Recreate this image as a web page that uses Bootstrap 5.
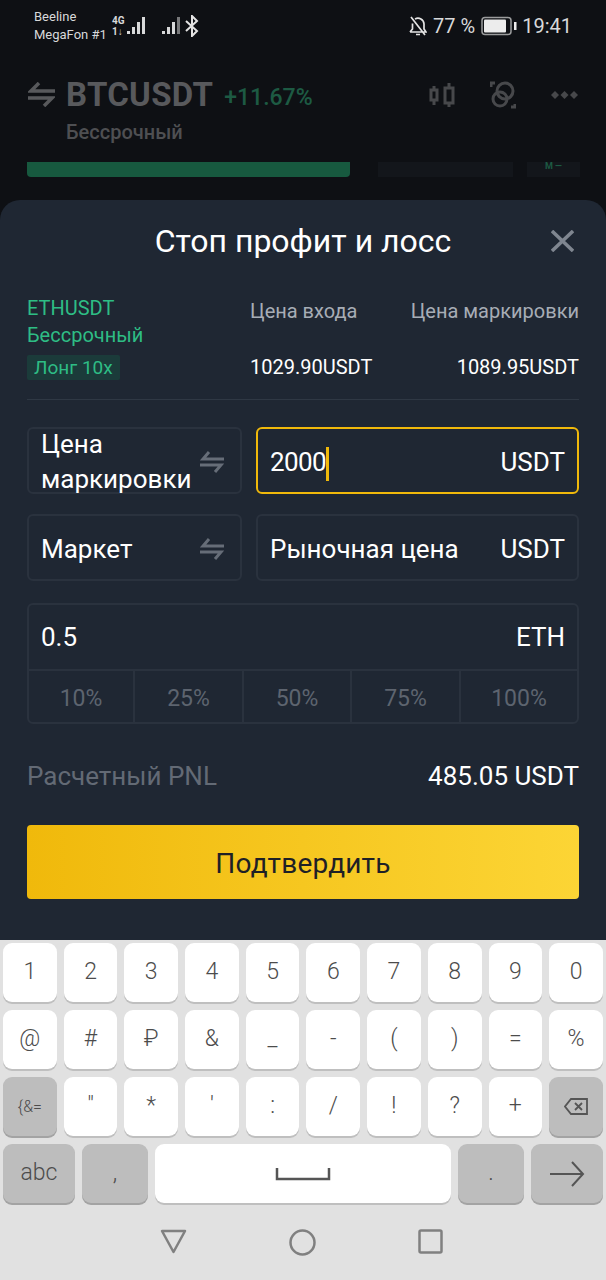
<!DOCTYPE html>
<html lang="ru">
<head>
  <meta charset="UTF-8" />
  <meta name="viewport" content="width=device-width, initial-scale=1" />
  <title>Стоп профит и лосс</title>
  <link href="https://cdn.jsdelivr.net/npm/bootstrap@5.3.0/dist/css/bootstrap.min.css" rel="stylesheet" />
  <style>
    body { background: #0e1014; font-family: Roboto, "Liberation Sans", sans-serif; width: 606px; height: 1280px; overflow: hidden; }
    /* status bar */
    .status-strip { height: 52px; padding: 0 34px; color: #d8d9da; }
    .carrier-names { font-size: 13px; line-height: 18px; width: 78px; }
    .net-tiny { font-size: 10px; line-height: 11px; font-weight: 700; width: 14px; margin-right: 1px; }
    .status-pct { font-size: 20px; margin: 0 6px; }
    .status-time { font-size: 20px; margin-left: 5px; }
    .sim-two { margin-left: 16px; }
    /* dimmed header behind the sheet */
    .dim-head { height: 148px; padding: 22px 28px 0 28px; }
    .dim-pair { font-size: 33px; line-height: 40px; font-weight: 700; color: #58595c; margin-left: 11px; letter-spacing: .3px; }
    .dim-change { font-size: 23px; font-weight: 500; color: #1d5a43; margin-left: 11px; padding-top: 7px; }
    .dim-sub { font-size: 20px; line-height: 22px; font-weight: 500; color: #4e4f52; margin: 5px 0 0 38px; }
    .dim-icons { gap: 35px; }
    .dim-bars { margin: 19px -2px 0 -1px; gap: 28px; }
    .dim-bar-main { width: 323px; height: 15px; background: #17593f; border-radius: 0 0 4px 4px; }
    .dim-bar-faint { width: 135px; height: 15px; background: #13161b; }
    .dim-bar-end { width: 53px; height: 15px; background: #13161b; margin-left: -14px; color: #1d5a43; font-size: 9px; line-height: 9px; text-align: center; font-weight: 700; }
    /* bottom sheet */
    .sheet { height: 740px; background: #1f2733; border-radius: 20px 20px 0 0; padding: 0 27px; color: #fff; }
    .sheet-title { height: 82px; font-size: 32px; position: relative; }
    .sheet-close { position: absolute; right: 5px; top: 30px; }
    .pos-info { height: 118px; padding-top: 13px; border-bottom: 1px solid #2f3844; }
    .pos-first { width: 223px; }
    .pos-green { color: #2ebd85; font-size: 20px; line-height: 27px; }
    .pos-tag { display: inline-block; background: #1b3b3a; color: #2ebd85; font-size: 19px; line-height: 25px; padding: 0 7px; border-radius: 2px; margin-top: 6px; }
    .pos-label { color: #a7adb6; font-size: 20px; line-height: 27px; padding-top: 3px; }
    .pos-val { font-size: 20px; line-height: 24px; margin-top: 30px; }
    .pair-row { gap: 14px; margin-top: 27px; }
    .pair-row + .pair-row { margin-top: 20px; }
    .field-box { height: 67px; border: 2px solid #2a323e; border-radius: 6px; padding: 3px 12px 0; font-size: 26px; }
    .field-left { width: 215px; padding-right: 16px; }
    .field-right { width: 323px; }
    .field-active { border-color: #f0b90b; }
    .two-lines { line-height: 35px; }
    .caret-mark { display: inline-block; width: 3px; height: 34px; background: #f0b90b; vertical-align: middle; }
    .tight-num { letter-spacing: -.6px; }
    .amount-box { margin-top: 22px; border: 2px solid #2a323e; border-radius: 6px; font-size: 26px; }
    .amount-top { height: 66px; padding: 1px 12px 0; border-bottom: 2px solid #2a323e; }
    .pct-cell { height: 51px; padding-top: 6px; font-size: 23px; color: #5d646f; width: 109px; border-left: 2px solid #2a323e; }
    .pct-cell:first-child { border-left: 0; width: 104px; }
    .pct-cell:nth-child(3) { width: 108px; }
    .pct-cell:last-child { width: 118px; }
    .pnl-row { margin-top: 35px; height: 34px; font-size: 26px; }
    .pnl-label { color: #636a75; }
    .confirm-btn { margin-top: 32px; height: 74px; width: 100%; padding-top: 10px; background: linear-gradient(90deg, #f0b90b, #fcd535); color: #1e2026; font-size: 28px; letter-spacing: .2px; border-radius: 4px; border: 0; }
    /* keyboard */
    .kbd-area { height: 340px; background: #e1e1e1; padding: 3px 3px 0; }
    .kbd-row { gap: 7px; height: 59px; margin-bottom: 8px; }
    .kbd-key { width: 53.7px; background: #fff; border-radius: 9px; color: #4c4c4c; font-size: 23px; font-weight: 300; box-shadow: 0 2px 0 #bfbfbf; }
    .kbd-key.kbd-gray { background: #bdbdbd; box-shadow: 0 2px 0 #a3a3a3; }
    .kbd-wide { width: 72px; }
    .kbd-mid { width: 66px; }
    .kbd-space { width: 296px; }
    .kbd-small { font-size: 16px; }
    .sys-nav { margin-top: 26px; padding-right: 3px; gap: 102px; }
  </style>
</head>
<body>
  <!-- Status bar -->
  <div class="status-strip d-flex align-items-center">
    <div class="carrier-names">Beeline<br />MegaFon #1</div>
    <div class="net-tiny">4G<br />1↓</div>
    <svg width="18" height="20" viewBox="0 0 18 20" fill="#d8d9da"><rect x="0" y="15" width="3" height="3"/><rect x="5" y="11" width="3" height="7"/><rect x="10" y="6" width="3" height="12"/><rect x="15" y="1" width="3" height="17"/></svg>
    <svg class="sim-two" width="20" height="20" viewBox="0 0 20 20"><rect x="1" y="15" width="3" height="3" fill="#d8d9da"/><rect x="6" y="11" width="3" height="7" fill="#d8d9da"/><rect x="11" y="6" width="3" height="12" fill="#d8d9da"/><rect x="16" y="1" width="3" height="17" fill="#77787a"/></svg>
    <svg class="ms-1" width="14" height="22" viewBox="0 0 14 22" fill="none" stroke="#e4e4e4" stroke-width="2"><path d="M1 6l11 10-5 5V1l5 5L1 16"/></svg>
    <div class="ms-auto d-flex align-items-center">
      <svg width="18" height="20" viewBox="0 0 18 20" fill="none" stroke="#e4e4e4" stroke-width="1.7"><path d="M1 16h16l-2-3V8a6 6 0 0 0-9-5M3.500 7.500V13L1 16M7 18.500h4M2 1l14 18"/></svg>
      <span class="status-pct">77 %</span>
      <svg width="36" height="20" viewBox="0 0 36 20"><rect x="1" y="1.500" width="29" height="17" rx="3" fill="none" stroke="#9b9c9d" stroke-width="1.500"/><rect x="3" y="3.500" width="22" height="13" rx="1" fill="#ececec"/><rect x="33" y="6" width="2.500" height="8" fill="#ececec"/></svg>
      <span class="status-time">19:41</span>
    </div>
  </div>

  <!-- Dimmed screen behind the sheet -->
  <div class="dim-head">
    <div class="d-flex align-items-center">
      <svg width="27" height="25" viewBox="0 0 27 25" fill="none" stroke="#58595c" stroke-width="3.500"><path d="M27 9H3L11 1M0 16h24l-8 8"/></svg>
      <span class="dim-pair">BTCUSDT</span>
      <span class="dim-change">+11.67%</span>
      <div class="ms-auto d-flex align-items-center dim-icons">
        <svg width="26" height="26" viewBox="0 0 26 26" fill="none" stroke="#47484b" stroke-width="3"><rect x="2" y="8" width="6" height="10"/><path d="M5 4v4M5 18v5M20 1v5M20 21v4"/><rect x="16" y="6" width="8" height="15"/></svg>
        <svg width="26" height="28" viewBox="0 0 26 28" fill="none" stroke="#47484b" stroke-width="3"><circle cx="15" cy="10" r="8"/><circle cx="10" cy="18" r="7"/><path d="M1 6V2h4M25 23v3h-4"/></svg>
        <svg width="27" height="8" viewBox="0 0 27 8" fill="#47484b"><path d="M4 0l4 4-4 4-4-4zM13.500 0l4 4-4 4-4-4zM23 0l4 4-4 4-4-4z"/></svg>
      </div>
    </div>
    <div class="dim-sub">Бессрочный</div>
    <div class="d-flex dim-bars">
      <div class="dim-bar-main"></div>
      <div class="dim-bar-faint"></div>
      <div class="dim-bar-end">M —</div>
    </div>
  </div>

  <!-- Bottom sheet -->
  <div class="sheet">
    <div class="sheet-title d-flex align-items-center justify-content-center">
      Стоп профит и лосс
      <svg class="sheet-close" width="23" height="22" viewBox="0 0 23 22" fill="none" stroke="#7f8690" stroke-width="3.500"><path d="M1 1l21 20M22 1L1 21"/></svg>
    </div>

    <div class="pos-info d-flex">
      <div class="pos-first">
        <div class="pos-green">ETHUSDT</div>
        <div class="pos-green">Бессрочный</div>
        <span class="pos-tag">Лонг 10х</span>
      </div>
      <div class="me-auto">
        <div class="pos-label">Цена входа</div>
        <div class="pos-val">1029.90USDT</div>
      </div>
      <div class="text-end">
        <div class="pos-label">Цена маркировки</div>
        <div class="pos-val">1089.95USDT</div>
      </div>
    </div>

    <div class="d-flex pair-row">
      <div class="field-box field-left d-flex align-items-center justify-content-between">
        <span class="two-lines">Цена<br />маркировки</span>
        <svg width="24" height="22" viewBox="0 0 24 22" fill="none" stroke="#666d78" stroke-width="3"><path d="M24 8H3L9 1M0 14h21l-6 7"/></svg>
      </div>
      <div class="field-box field-right field-active d-flex align-items-center justify-content-between">
        <span><span class="tight-num">2000</span><span class="caret-mark"></span></span>
        <span>USDT</span>
      </div>
    </div>

    <div class="d-flex pair-row">
      <div class="field-box field-left d-flex align-items-center justify-content-between">
        <span>Маркет</span>
        <svg width="24" height="22" viewBox="0 0 24 22" fill="none" stroke="#666d78" stroke-width="3"><path d="M24 8H3L9 1M0 14h21l-6 7"/></svg>
      </div>
      <div class="field-box field-right d-flex align-items-center justify-content-between">
        <span>Рыночная цена</span>
        <span>USDT</span>
      </div>
    </div>

    <div class="amount-box">
      <div class="amount-top d-flex align-items-center justify-content-between">
        <span>0.5</span>
        <span>ETH</span>
      </div>
      <div class="d-flex">
        <div class="pct-cell d-flex align-items-center justify-content-center">10%</div>
        <div class="pct-cell d-flex align-items-center justify-content-center">25%</div>
        <div class="pct-cell d-flex align-items-center justify-content-center">50%</div>
        <div class="pct-cell d-flex align-items-center justify-content-center">75%</div>
        <div class="pct-cell d-flex align-items-center justify-content-center">100%</div>
      </div>
    </div>

    <div class="pnl-row d-flex align-items-center justify-content-between">
      <span class="pnl-label">Расчетный PNL</span>
      <span>485.05 USDT</span>
    </div>

    <button type="button" class="btn confirm-btn">Подтвердить</button>
  </div>

  <!-- Keyboard -->
  <div class="kbd-area">
    <div class="d-flex kbd-row" id="kbdRow1"></div>
    <div class="d-flex kbd-row" id="kbdRow2"></div>
    <div class="d-flex kbd-row" id="kbdRow3"></div>
    <div class="d-flex kbd-row">
      <div class="kbd-key kbd-gray kbd-wide d-flex align-items-center justify-content-center">abc</div>
      <div class="kbd-key kbd-gray kbd-mid d-flex align-items-center justify-content-center">,</div>
      <div class="kbd-key kbd-space d-flex align-items-center justify-content-center">
        <svg width="56" height="14" viewBox="0 0 56 14" fill="none" stroke="#555" stroke-width="2.500"><path d="M2 1v11h52V1"/></svg>
      </div>
      <div class="kbd-key kbd-gray kbd-mid d-flex align-items-center justify-content-center">.</div>
      <div class="kbd-key kbd-gray kbd-wide d-flex align-items-center justify-content-center">
        <svg width="36" height="26" viewBox="0 0 36 26" fill="none" stroke="#555" stroke-width="2"><path d="M1 13h33M23 1l11 12-11 12"/></svg>
      </div>
    </div>
    <div class="d-flex justify-content-center sys-nav">
      <svg width="27" height="25" viewBox="0 0 27 25" fill="none" stroke="#808080" stroke-width="2.500" stroke-linejoin="round"><path d="M2 2h23L13.500 23z"/></svg>
      <svg width="27" height="27" viewBox="0 0 27 27" fill="none" stroke="#808080" stroke-width="2.500"><circle cx="13.500" cy="13.500" r="12"/></svg>
      <svg width="25" height="25" viewBox="0 0 25 25" fill="none" stroke="#808080" stroke-width="2.500"><rect x="1.500" y="1.500" width="22" height="22" rx="1.500"/></svg>
    </div>
  </div>

  <script src="https://cdn.jsdelivr.net/npm/bootstrap@5.3.0/dist/js/bootstrap.bundle.min.js"></script>
  <script>
    // fill the key rows
    const rows = {
      kbdRow1: ['1','2','3','4','5','6','7','8','9','0'],
      kbdRow2: ['@','#','₽','&','_','-','(',')','=','%'],
      kbdRow3: ['{&=','"','*',"'",':','/','!','?','+','del']
    };
    const delIcon = '<svg width="24" height="17" viewBox="0 0 24 17" fill="none" stroke="#555" stroke-width="1.800"><path d="M7 1h16v15H7L1 8.500zM11 5l7 7M18 5l-7 7"/></svg>';
    Object.keys(rows).forEach(function (id) {
      const row = document.getElementById(id);
      rows[id].forEach(function (k) {
        const key = document.createElement('div');
        key.className = 'kbd-key d-flex align-items-center justify-content-center';
        if (k === '{&=') key.className += ' kbd-gray kbd-small';
        if (k === 'del') { key.className += ' kbd-gray'; key.innerHTML = delIcon; }
        else key.textContent = k;
        row.appendChild(key);
      });
    });
  </script>
</body>
</html>
